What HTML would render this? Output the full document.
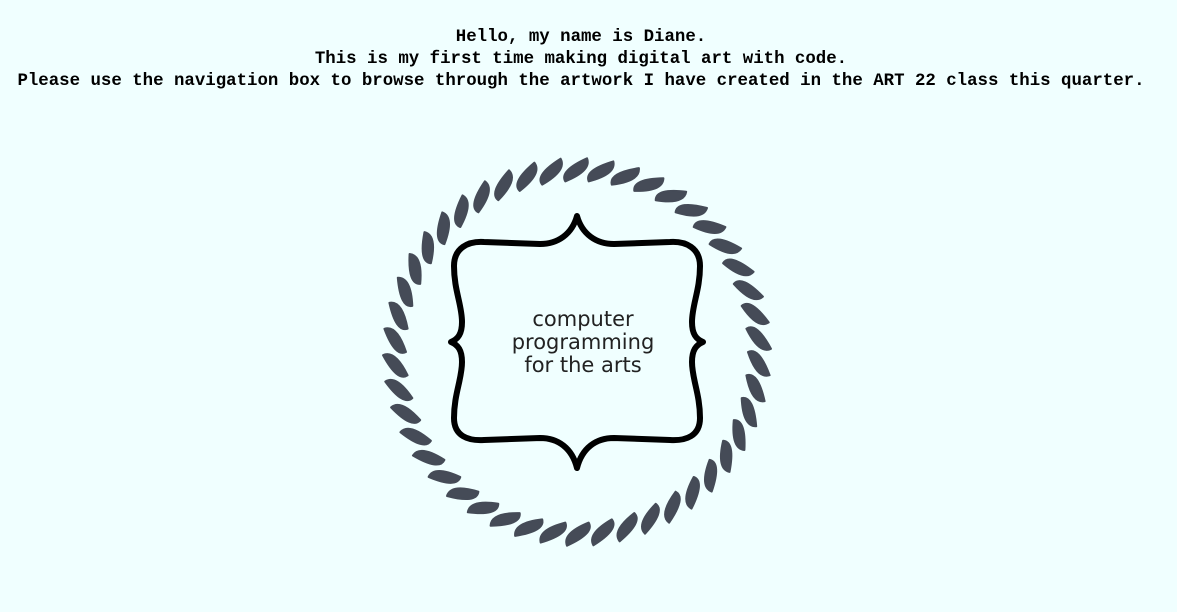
<!DOCTYPE html>
<html><head><style>
html,body{margin:0;padding:0;background:#f0ffff;width:1177px;height:612px;overflow:hidden}
.t{position:absolute;top:27px;left:0;width:1162px;text-align:center;font:bold 17.4px/22px "Liberation Mono",monospace;color:#000;white-space:pre}
svg{position:absolute;left:0;top:0}
</style></head><body>
<div class="t">Hello, my name is Diane.
This is my first time making digital art with code.
Please use the navigation box to browse through the artwork I have created in the ART 22 class this quarter.</div>
<svg width="1177" height="612" viewBox="0 0 1177 612">
<g id="rope" fill="#454b57" stroke="#454b57" stroke-width="2" stroke-linejoin="round"></g>
<path d="M577,216 C582,234 596,244 614,244 L670,242 C686,241 700,248 700,266 C700,290 692,305 692,322 C692,334 696,339 703,342 C696,345 692,350 692,362 C692,379 700,394 700,418 C700,436 686,441 670,440 L614,438 C596,438 582,448 577,468 C572,448 558,438 540,438 L484,440 C468,441 454,436 454,418 C454,394 462,379 462,362 C462,350 458,345 451,342 C458,339 462,334 462,322 C462,305 454,290 454,266 C454,248 468,241 484,242 L540,244 C558,244 572,234 577,216 Z" fill="none" stroke="#000" stroke-width="6" stroke-linejoin="round"/>
<g font-family="'DejaVu Sans','Liberation Sans',sans-serif" font-size="21" fill="#222" text-anchor="middle">
<text x="583" y="326">computer</text>
<text x="583" y="349">programming</text>
<text x="583" y="372">for the arts</text>
</g>
</svg>
<script>
var g=document.getElementById('rope'),cx=577,cy=352,n=46,s='';
function P(r,a){return (cx+r*Math.cos(a)).toFixed(1)+','+(cy+r*Math.sin(a)).toFixed(1);}
for(var i=0;i<n;i++){var a=i/n*2*Math.PI,d=0.12,o=0.09;
s+='<path d="M'+P(171,a)+' Q'+P(182,a+d*0.5-o)+' '+P(194,a+d)+' Q'+P(182,a+d*0.5+o)+' '+P(171,a)+' Z"/>';}
g.innerHTML=s;
</script>
</body></html>
